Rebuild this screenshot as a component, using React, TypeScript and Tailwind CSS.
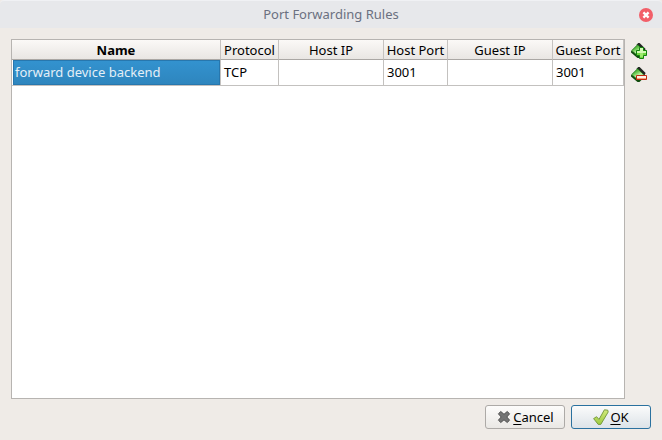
import { useState } from "react";

const columns = [
  { label: "Name", width: "" },
  { label: "Protocol", width: "w-[58px]" },
  { label: "Host IP", width: "w-[105px]" },
  { label: "Host Port", width: "w-[64px]" },
  { label: "Guest IP", width: "w-[105px]" },
  { label: "Guest Port", width: "w-[71px]" },
];

const rules = [["forward device backend", "TCP", "", "3001", "", "3001"]];

function RuleDiamond({ id }: { id: string }) {
  return (
    <>
      <defs>
        <linearGradient id={id} x1="0.2" y1="0" x2="0.8" y2="1">
          <stop offset="0" stopColor="#1f8a18" />
          <stop offset="0.35" stopColor="#6cc950" />
          <stop offset="0.6" stopColor="#c8f2b0" />
          <stop offset="1" stopColor="#4fb53a" />
        </linearGradient>
      </defs>
      <path d="M0 8 V9.5 L6.5 15 H8.5 L11 12.5 V10 Z" fill="#0f4a0c" />
      <path d="M5.5 1.8 L7.2 0 H8.6 L14.6 6 L13.5 8.5 Z" fill="#222722" />
      <path d="M0.7 7.6 L6.6 1.7 L12.4 7.5 L7 13 Z" fill={`url(#${id})`} stroke="#1b7415" strokeWidth="0.8" />
    </>
  );
}

function AddIcon() {
  return (
    <svg viewBox="0 0 16 16" className="size-4" aria-hidden="true">
      <RuleDiamond id="add-face" />
      <path
        d="M8.5 4.5 H12.5 V7.5 H15.5 V12.5 H12.5 V15.5 H8.5 V12.5 H5.5 V7.5 H8.5 Z"
        fill="#6fd83f"
        stroke="#138210"
      />
      <path d="M9 5 H12 V8 H15 V10 H6 V8 H9 Z" fill="#d2fbb4" />
      <path d="M9 10 H12 V14 H9 Z" fill="#9aec6c" />
    </svg>
  );
}

function RemoveIcon() {
  return (
    <svg viewBox="0 0 16 16" className="size-4" aria-hidden="true">
      <RuleDiamond id="remove-face" />
      <path d="M5.5 8.5 H15.5 V12.5 H5.5 Z" fill="#f9a47a" stroke="#c22a10" />
      <path d="M6 9 H15 V11 H6 Z" fill="#fff1e8" />
    </svg>
  );
}

function CrossIcon() {
  return (
    <svg viewBox="0 0 16 16" className="size-4" aria-hidden="true">
      <path
        d="M4.8 2.5 L8 5.3 L11.2 2.5 L13.6 4.8 L10.8 8 L13.6 11.2 L11.2 13.5 L8 10.8 L4.8 13.5 L2.4 11.2 L5.2 8 L2.4 4.8 Z"
        fill="#747474"
        stroke="#505050"
        strokeLinejoin="round"
      />
    </svg>
  );
}

function CheckIcon() {
  return (
    <svg viewBox="0 0 16 16" className="size-4" aria-hidden="true">
      <defs>
        <linearGradient id="check-face" x1="0" y1="0" x2="0" y2="1">
          <stop offset="0" stopColor="#d3ea7c" />
          <stop offset="1" stopColor="#9ccb40" />
        </linearGradient>
      </defs>
      <path
        d="M0.6 9.6 L3.6 7.7 L6 10.4 L11.4 0.8 L14.8 1.2 L15.2 3 L7.8 15.4 L5.2 15.4 Z"
        fill="url(#check-face)"
        stroke="#6f9438"
        strokeWidth="0.9"
        strokeLinejoin="round"
      />
    </svg>
  );
}

export default function App() {
  const [selected, setSelected] = useState("0-0");

  return (
    <div className="flex h-screen flex-col bg-[#efebe7] font-['Noto_Sans',sans-serif] text-[13px] leading-4 text-black">
      <header className="relative flex h-7 shrink-0 items-center justify-center rounded-t-sm border-t border-[#f0f1f4] bg-[#e7e8eb] text-[#6b7080]">
        <h1 className="pb-0.5">Port Forwarding Rules</h1>
        <button
          type="button"
          aria-label="Close"
          className="absolute right-[9px] flex size-3.5 items-center justify-center rounded-full bg-[#f25f69]"
        >
          <svg viewBox="0 0 14 14" className="size-3.5" aria-hidden="true">
            <path d="M4.4 4.4 L9.6 9.6 M9.6 4.4 L4.4 9.6" stroke="#fff" strokeWidth="2.3" />
          </svg>
        </button>
      </header>

      <main className="flex min-h-0 flex-1 flex-col gap-1.5 p-[11px]">
        <div className="flex min-h-0 flex-1 gap-0.5">
          <div className="min-w-0 flex-1 overflow-hidden border border-[#b7b4b1] bg-white">
            <table className="w-full table-fixed border-separate border-spacing-0">
              <thead>
                <tr>
                  {columns.map((column) => (
                    <th
                      key={column.label}
                      scope="col"
                      className={`h-5 border-r border-b border-r-[#c6c3c0] border-b-[#aaa7a4] bg-linear-to-b from-[#fbf9f7] to-[#e9e6e3] p-0 whitespace-nowrap ${
                        column.label === "Name" ? "font-bold" : "font-normal"
                      } ${column.width}`}
                    >
                      {column.label}
                    </th>
                  ))}
                </tr>
              </thead>
              <tbody>
                {rules.map((rule, row) => (
                  <tr key={row}>
                    {rule.map((value, col) => {
                      const key = `${row}-${col}`;
                      return (
                        <td
                          key={key}
                          onClick={() => setSelected(key)}
                          className="h-[26px] border-r border-b border-[#c3c1bf] p-0 whitespace-nowrap"
                        >
                          <div
                            className={
                              selected === key
                                ? "ml-px flex h-[25px] items-center border border-[#2777ae] bg-linear-to-b from-[#3392cf] to-[#2e86be] px-px pb-0.5 text-[#e4eff7]"
                                : "flex h-[25px] items-center px-[3px] pb-0.5"
                            }
                          >
                            {value}
                          </div>
                        </td>
                      );
                    })}
                  </tr>
                ))}
              </tbody>
            </table>
          </div>

          <div className="flex flex-col">
            <button type="button" aria-label="Add rule" className="flex size-6 items-center justify-center">
              <AddIcon />
            </button>
            <button type="button" aria-label="Remove rule" className="flex size-6 items-center justify-center">
              <RemoveIcon />
            </button>
          </div>
        </div>

        <footer className="flex shrink-0 justify-end gap-1.5">
          <button
            type="button"
            className="flex h-6 w-20 items-center justify-center gap-px rounded-[3px] border border-[#adaaa7] bg-linear-to-b from-[#fdfcfb] to-[#eae8e5]"
          >
            <CrossIcon />
            <span>
              <span className="underline underline-offset-2">C</span>ancel
            </span>
          </button>
          <button
            type="button"
            className="flex h-6 w-20 items-center justify-center gap-px rounded-[3px] border border-[#2a719f] bg-linear-to-b from-[#fbfbfb] to-[#dce3e8]"
          >
            <CheckIcon />
            <span>
              <span className="underline underline-offset-2">O</span>K
            </span>
          </button>
        </footer>
      </main>
    </div>
  );
}
